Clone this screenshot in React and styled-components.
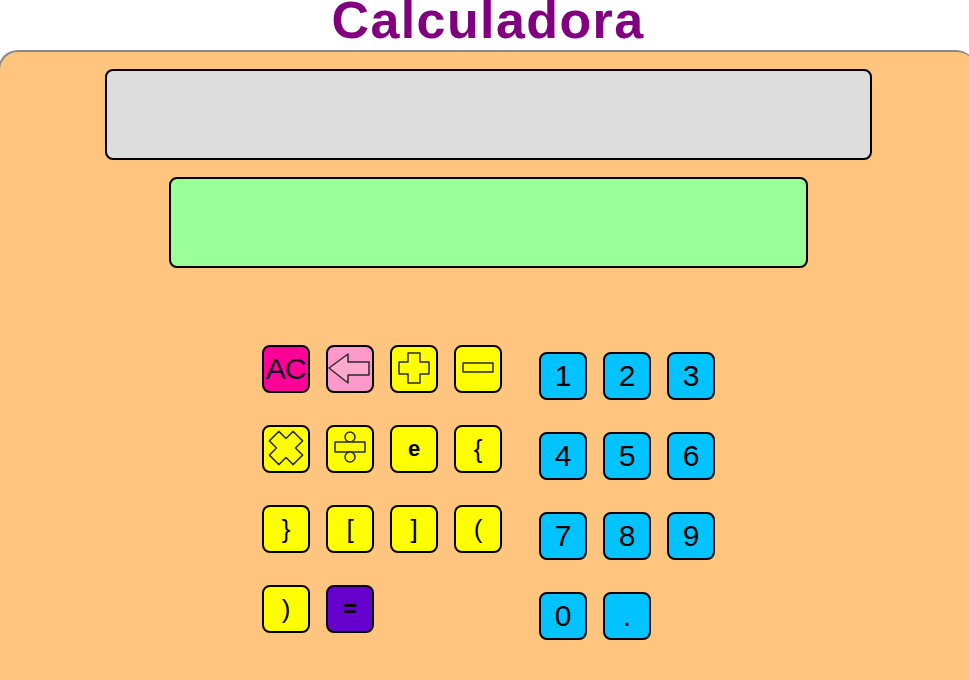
import React from 'react';
import styled, { createGlobalStyle } from 'styled-components';

// == Styles globaux
const GlobalStyle = createGlobalStyle`
  html, body {
    margin: 0;
    padding: 0;
    background: #ffffff;
    overflow: hidden;
  }
  body {
    font-family: "Liberation Sans", Arial, sans-serif;
  }
`;

const colors = {
  clear: '#ff0099',
  back: '#ff99cc',
  op: '#ffff00',
  equal: '#6600cc',
  digit: '#00c3ff',
};

const Page = styled.div`
  width: 976px;
  height: 680px;
  display: flex;
  flex-direction: column;
`;

const Title = styled.h1`
  margin: 0;
  height: 50px;
  line-height: 40px;
  font-size: 52px;
  font-weight: bold;
  color: #800080;
  text-align: center;
  letter-spacing: 1.4px;
`;

const Panel = styled.div`
  flex: 1;
  background: #ffc57f;
  border-top: 2px solid #888888;
  border-left: 2px solid #888888;
  margin-left: -2px;
  border-radius: 20px 20px 0 0;
  padding-top: 17px;
  display: flex;
  flex-direction: column;
  align-items: center;
`;

const Screen = styled.div`
  box-sizing: border-box;
  width: ${(p) => p.width}px;
  height: 91px;
  border: 2px solid #000;
  border-radius: 8px;
  background: ${(p) => p.bg};
  margin-bottom: 17px;
`;

const Keypad = styled.div`
  margin-top: 60px;
  display: flex;
  gap: 37px;
`;

const Group = styled.div`
  display: grid;
  grid-template-columns: repeat(${(p) => p.cols}, 48px);
  grid-auto-rows: 48px;
  column-gap: 16px;
  row-gap: 32px;
  margin-top: ${(p) => p.offset || 0}px;
  align-content: start;
`;

const Key = styled.button`
  box-sizing: border-box;
  width: 48px;
  height: 48px;
  padding: 0;
  border: 2px solid #000;
  border-radius: 8px;
  background: ${(p) => colors[p.kind]};
  color: ${(p) => (p.kind === 'clear' ? '#110022' : '#000')};
  font-family: "Liberation Sans", Arial, sans-serif;
  font-size: ${(p) => p.size || 30}px;
  font-weight: ${(p) => (p.bold ? 'bold' : 'normal')};
  line-height: 1;
  display: flex;
  align-items: center;
  justify-content: center;
  cursor: pointer;
  letter-spacing: -1px;
`;

const Icon = styled.svg`
  width: 44px;
  height: 44px;
  display: block;
`;

// == Icônes
const line = { stroke: '#2a2a2a', strokeWidth: 1.5, strokeLinejoin: 'round' };

const BackIcon = () => (
  <Icon viewBox="2 2 44 44">
    <polygon points="3,23 22,9 22,17 43,17 43,30 22,30 22,38" fill="#ffaacc" {...line} />
  </Icon>
);

const plusPoints = '18,8 30,8 30,17 39,17 39,29 30,29 30,38 18,38 18,29 9,29 9,17 18,17';

const PlusIcon = () => (
  <Icon viewBox="2 2 44 44">
    <polygon points={plusPoints} fill="#ffff00" {...line} />
  </Icon>
);

const TimesIcon = () => (
  <Icon viewBox="2 2 44 44">
    <polygon
      points={plusPoints}
      fill="#ffff00"
      {...line}
      strokeWidth="1.3"
      transform="translate(24 23) rotate(45) scale(1.12) translate(-24 -23)"
    />
  </Icon>
);

const MinusIcon = () => (
  <Icon viewBox="2 2 44 44">
    <rect x="9" y="18" width="30" height="9" fill="#ffff00" {...line} />
  </Icon>
);

const DivideIcon = () => (
  <Icon viewBox="2 2 44 44">
    <circle cx="24" cy="12" r="5" fill="#ffff00" {...line} />
    <rect x="9" y="17" width="30" height="10" fill="#ffff00" {...line} />
    <circle cx="24" cy="32" r="5" fill="#ffff00" {...line} />
  </Icon>
);

const leftKeys = [
  { id: 'ac', kind: 'clear', label: 'AC' },
  { id: 'back', kind: 'back', icon: <BackIcon /> },
  { id: 'plus', kind: 'op', icon: <PlusIcon /> },
  { id: 'minus', kind: 'op', icon: <MinusIcon /> },
  { id: 'times', kind: 'op', icon: <TimesIcon /> },
  { id: 'divide', kind: 'op', icon: <DivideIcon /> },
  { id: 'e', kind: 'op', label: 'e', size: 22, bold: true },
  { id: 'lbrace', kind: 'op', label: '{', size: 26 },
  { id: 'rbrace', kind: 'op', label: '}', size: 26 },
  { id: 'lbracket', kind: 'op', label: '[', size: 26 },
  { id: 'rbracket', kind: 'op', label: ']', size: 26 },
  { id: 'lparen', kind: 'op', label: '(', size: 26 },
  { id: 'rparen', kind: 'op', label: ')', size: 26 },
  { id: 'equal', kind: 'equal', label: '=', size: 24, bold: true },
];

const digitKeys = ['1', '2', '3', '4', '5', '6', '7', '8', '9', '0', '.'];

// == Composant
const App = () => (
  <Page>
    <GlobalStyle />
    <Title>Calculadora</Title>
    <Panel>
      <Screen width={767} bg="#dddddd" />
      <Screen width={639} bg="#99ff99" />
      <Keypad>
        <Group cols={4}>
          {leftKeys.map((key) => (
            <Key key={key.id} kind={key.kind} size={key.size} bold={key.bold}>
              {key.icon || key.label}
            </Key>
          ))}
        </Group>
        <Group cols={3} offset={7}>
          {digitKeys.map((digit) => (
            <Key key={digit} kind="digit">
              {digit}
            </Key>
          ))}
        </Group>
      </Keypad>
    </Panel>
  </Page>
);

export default App;
